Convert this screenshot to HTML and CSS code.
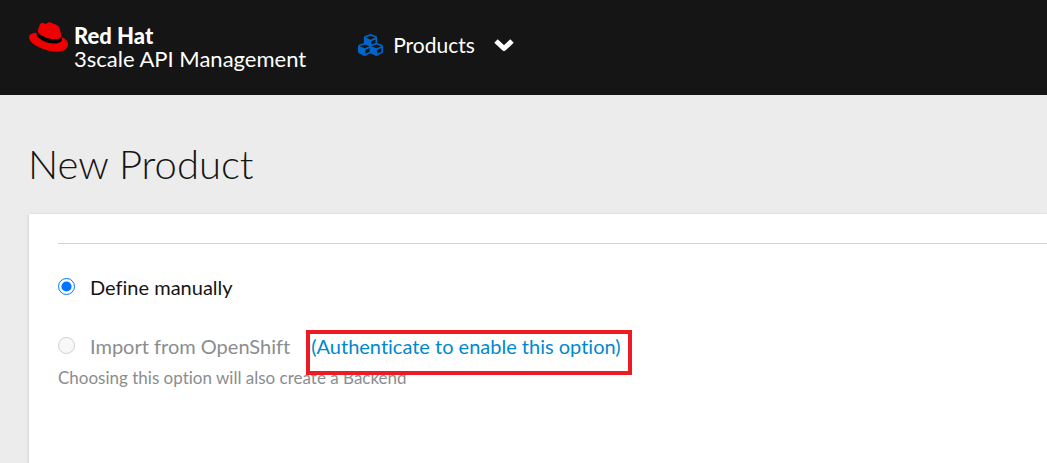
FILE: index.html
```html
<!DOCTYPE html>
<html lang="en">
<head>
<meta charset="utf-8">
<title>New Product</title>
<link rel="stylesheet" href="styles.css">
</head>
<body>
<header class="masthead">
  <a class="brand" href="#">
    <svg class="brand-hat" viewBox="0 2.9 24 18.2" aria-hidden="true">
      <path fill="#000" d="M5 8L20 10.500L21 15L17 17L9 15L4 11Z"/>
      <path fill="#e00" d="M16.009 13.386c1.577 0 3.86-.326 3.86-2.202a1.765 1.765 0 0 0-.04-.431l-.94-4.080c-.216-.898-.406-1.305-1.982-2.093-1.223-.625-3.888-1.658-4.676-1.658-.733 0-.947.946-1.822.946-.842 0-1.467-.706-2.255-.706-.757 0-1.250.515-1.630 1.576 0 0-1.060 2.990-1.197 3.424a.81.81 0 0 0-.028.245c0 1.162 4.577 4.974 10.710 4.974m4.101-1.435c.218 1.032.218 1.140.218 1.277 0 1.765-1.984 2.745-4.593 2.745-5.895.004-11.060-3.451-11.060-5.734a2.326 2.326 0 0 1 .190-.925C2.746 9.415 0 9.794 0 12.217c0 3.969 9.405 8.861 16.851 8.861 5.710 0 7.149-2.582 7.149-4.620 0-1.605-1.387-3.425-3.887-4.512"/>
    </svg>
    <span class="brand-text"><strong class="brand-name">Red Hat</strong><span class="brand-product">3scale API Management</span></span>
  </a>
  <button class="context" type="button">
    <svg class="context-icon" viewBox="0 32 512 448" aria-hidden="true">
      <path fill="#06c" d="M488.600 250.200L392 214V105.500c0-15-9.300-28.400-23.400-33.700l-100-37.500c-8.100-3.100-17.100-3.100-25.300 0l-100 37.500c-14.100 5.300-23.400 18.700-23.400 33.700V214l-96.600 36.200C9.300 255.500 0 268.900 0 283.900V394c0 13.600 7.700 26.100 19.900 32.200l100 50c10.100 5.100 22.100 5.100 32.200 0l103.900-52 103.900 52c10.100 5.100 22.100 5.100 32.200 0l100-50c12.200-6.100 19.900-18.600 19.900-32.200V283.900c0-15-9.300-28.400-23.400-33.700zM358 214.800l-85 31.900v-68.200l85-37v73.300zM154 104.100l102-38.200 102 38.200v.6l-102 41.400-102-41.400v-.6zm84 291.100l-85 42.500v-79.100l85-38.800v75.400zm0-112l-102 41.400-102-41.400v-.6l102-38.200 102 38.200v.6zm240 112l-85 42.500v-79.100l85-38.800v75.400zm0-112l-102 41.400-102-41.400v-.6l102-38.200 102 38.200v.6z"/>
    </svg>
    <span>Products</span>
    <svg class="context-caret" viewBox="0 0 20 14" aria-hidden="true">
      <path fill="none" stroke="#fff" stroke-width="5" stroke-linejoin="round" d="M2 3L10 10.500L18 3"/>
    </svg>
  </button>
</header>
<main class="page">
  <h1 class="title">New Product</h1>
  <form class="card">
    <hr class="rule">
    <div class="option">
      <input class="radio" type="radio" name="source" id="manual" checked>
      <label for="manual">Define manually</label>
    </div>
    <div class="option option-disabled">
      <input class="radio" type="radio" name="source" id="openshift" aria-describedby="hint" disabled>
      <label for="openshift">Import from OpenShift</label>
      <a class="auth" href="#">(Authenticate to enable this option)</a>
    </div>
    <p class="hint" id="hint">Choosing this option will also create a Backend</p>
  </form>
</main>
</body>
</html>
```
FILE: styles.css
```css
* { box-sizing: border-box; }

body {
  margin: 0;
  min-height: 100vh;
  display: flex;
  flex-direction: column;
  background: #ececec;
  color: #151515;
  font: 20px/28px Lato, sans-serif;
  font-variant-ligatures: none;
  white-space: nowrap;
  overflow-x: hidden;
}

.masthead {
  display: flex;
  align-items: flex-start;
  gap: 52px;
  height: 95px;
  padding: 22px 29px;
  background: #151515;
  color: #fff;
}

.brand {
  display: flex;
  gap: 6px;
  color: inherit;
  text-decoration: none;
}

.brand-hat { width: 39px; height: 30px; }

.brand-text {
  display: flex;
  flex-direction: column;
  padding-top: 2px;
  font-size: 22px;
  line-height: 23px;
}

.brand-name { font-weight: 900; }

.context {
  display: flex;
  align-items: center;
  padding: 9px 0;
  border: 0;
  background: none;
  color: inherit;
  font: inherit;
  font-size: 21px;
}

.context-icon { width: 25px; height: 22px; margin-right: 10px; }
.context-caret { width: 20px; height: 14px; margin-left: 19px; }

.page {
  flex: 1;
  display: flex;
  flex-direction: column;
  padding: 45px 0 0 28px;
}

.title {
  margin: 0 0 26px;
  font-size: 40px;
  line-height: 48px;
  font-weight: 300;
}

.card {
  flex: 1;
  margin-left: 1px;
  padding: 29px 0 29px 29px;
  background: #fff;
  box-shadow: 0 1px 3px rgba(0, 0, 0, 0.2);
}

.rule {
  margin: 0 0 29px;
  border: 0;
  border-top: 1px solid #d2d2d2;
}

.option {
  display: flex;
  align-items: center;
  height: 28px;
}

.radio { width: 17px; height: 17px; margin: 0 15px 1px 0; accent-color: #0075ff; }

.option-disabled { margin-top: 31px; color: #8a8d90; }

.auth {
  position: relative;
  margin-left: 21px;
  color: #0088ce;
  text-decoration: none;
}

.auth::after {
  content: "";
  position: absolute;
  inset: -2px -11px -15px -5px;
  border: 4px solid #ed1c24;
}

.hint {
  margin: 5px 0 0;
  font-size: 17px;
  line-height: 26px;
  color: #8a8d90;
}
```
